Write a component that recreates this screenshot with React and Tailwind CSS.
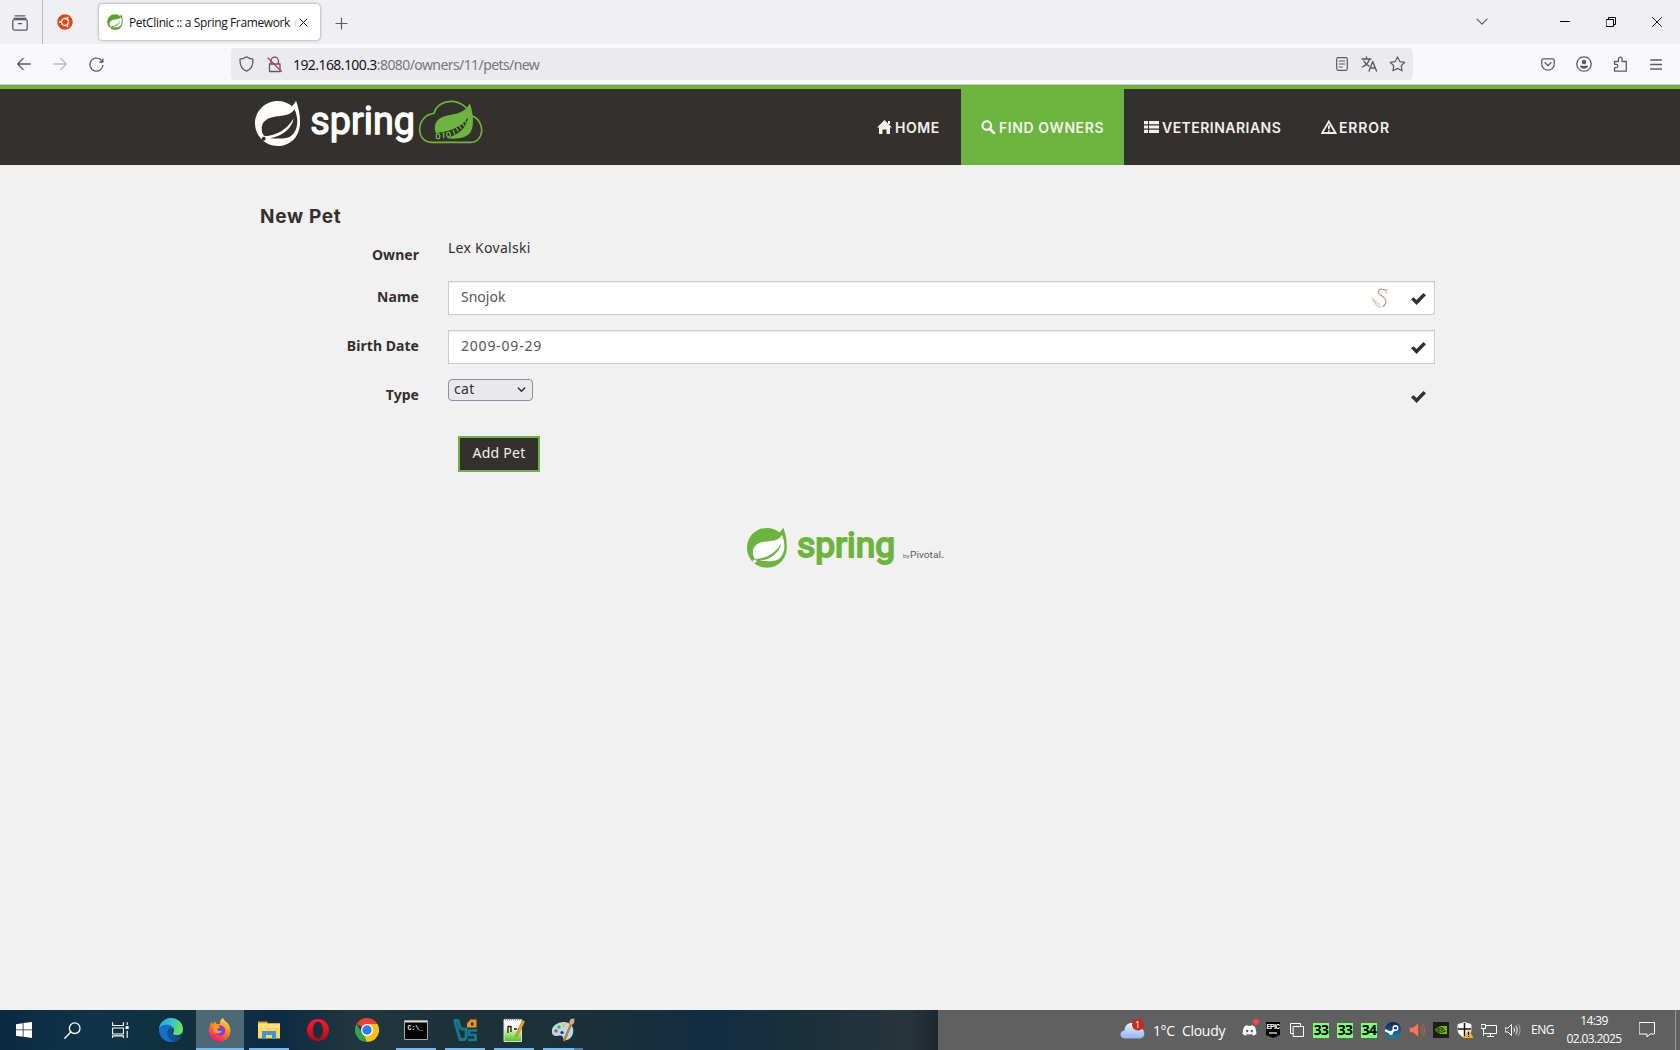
import React from "react";
import { FaDiscord, FaUbuntu } from "react-icons/fa";
import { SiNvidia } from "react-icons/si";

const UI = "font-['Open_Sans','Noto_Sans',sans-serif]";
const BODY = "font-['Noto_Sans','Open_Sans',sans-serif]";
const HEAD = "font-['Inter','Open_Sans',sans-serif]";

function Ico({ w = 16, h = w, vb, className = "", sw = 1.3, children }) {
  return (
    <svg width={w} height={h} viewBox={vb || `0 0 ${w} ${h}`} className={`shrink-0 ${className}`} fill="none" stroke="currentColor" strokeWidth={sw} strokeLinecap="round" strokeLinejoin="round">
      {children}
    </svg>
  );
}

/* Spring leaf mark on a 137x137 canvas */
function LeafMark({ color, leaf }) {
  return (
    <g>
      <path d="M112 19C117 14 121 8 124 2C131 20 136 42 136 62C138 108 108 138 69 138C32 138 1 108 1 70C1 33 32 3 69 3C86 3 101 9 112 19Z" fill={color} />
      <path d="M119 27C108 49 82 46 59 50C35 54 20 67 21 87C21 98 25 105 31 109C64 106 96 92 117 55C112 85 84 110 44 115C69 115 91 119 108 109C133 91 132 52 119 27Z" fill={leaf} />
      <circle cx="27" cy="116" r="6" fill={leaf} />
    </g>
  );
}

function HeaderLogo() {
  return (
    <svg width="228" height="47" viewBox="90 180 684 141" className="block shrink-0 overflow-visible">
      <g transform="translate(89 180)">
        <LeafMark color="#fff" leaf="#34302d" />
      </g>
      <text x="256" y="281" textLength="314" lengthAdjust="spacingAndGlyphs" fontFamily="Roboto, sans-serif" fontWeight="400" fontSize="116" fill="#fff" stroke="#fff" strokeWidth="4" strokeLinejoin="round">spring</text>
      <path d="M620 307C570 307 572 226 627 220C640 172 718 170 736 226C783 238 780 307 736 307Z" fill="none" stroke="#6db33f" strokeWidth="5" />
      <path d="M734 190C745 218 748 255 738 274C726 297 692 299 660 294C700 284 722 260 729 233C708 263 677 274 633 280C623 256 634 233 664 227C695 222 722 218 734 190Z" fill="#6db33f" />
      <path d="M633 280C677 274 708 263 729 233C724 262 704 284 662 295C650 299 640 299 634 298Z" fill="#34302d" />
      <g fill="none" stroke="#6db33f" strokeWidth="4">
        <rect x="634" y="282" width="10" height="14" rx="3" />
        <path d="M652 281l4-2v16M668 277c8-4 11 11 4 13s-10-10-4-13Z" />
        <path d="M684 270l6 14M694 264l6 10M703 257l6 10M712 250l6 8M719 242l5 7" />
      </g>
    </svg>
  );
}

function FooterLogo() {
  return (
    <svg width="200" height="42" viewBox="45 36 600 126" className="block shrink-0 overflow-visible">
      <g transform="translate(47 36) scale(.885)">
        <LeafMark color="#6db33f" leaf="#fff" />
      </g>
      <text x="198" y="127" textLength="294" lengthAdjust="spacingAndGlyphs" fontFamily="Roboto, sans-serif" fontWeight="400" fontSize="106" fill="#6db33f" stroke="#6db33f" strokeWidth="6" strokeLinejoin="round">spring</text>
      <text x="516" y="128" textLength="19" lengthAdjust="spacingAndGlyphs" fontFamily="Roboto, sans-serif" fontSize="18" fill="#666">by</text>
      <text x="537" y="128" textLength="93" lengthAdjust="spacingAndGlyphs" fontFamily="Roboto, sans-serif" fontSize="29" fill="#5c5c5c">Pivotal</text>
      <path d="M631 127h7" stroke="#777" strokeWidth="3" />
    </svg>
  );
}

function TabStrip() {
  return (
    <div className="flex h-[44px] items-center bg-[#f0eff4] text-[#5b5b66]">
      <div className="flex h-full w-[43px] items-center justify-center border-r border-[#b9b9c0] pl-[-2px]">
        <Ico w={16} className="mr-[3px] mt-[1px]" sw={1.3}><path d="M3 .8h10M2 3.4h12" /><rect x=".8" y="4.6" width="14.4" height="10.6" rx="2" /><path d="M6.3 8.600h3.400" /></Ico>
      </div>
      <div className="flex w-[56px] justify-center pr-[12px]">
        <span className="flex h-4 w-4 items-center justify-center rounded-full bg-white text-[#dd4814]"><FaUbuntu size={16} /></span>
      </div>
      <div className="flex h-[36px] w-[221px] items-center rounded-[4px] bg-white pl-2 text-[#15141a] shadow-[0_0_3px_rgba(0,0,0,.45)]">
        <svg width="16" height="16" viewBox="0 0 138 139" className="shrink-0"><LeafMark color="#5fa134" leaf="#fff" /></svg>
        <span className={`${UI} ml-[6px] mt-[2px] w-[163px] flex-none whitespace-nowrap text-[12px] leading-4 tracking-[-0.37px]`}>PetClinic :: a Spring Framework</span>
        <span className={`${UI} ml-[2px] mt-[2px] w-[3px] overflow-hidden text-[12px] leading-4 text-gray-300`}>d</span>
        <Ico w={9} className="ml-[2px]" sw={1}><path d="M1 1l7 7M8 1l-7 7" /></Ico>
      </div>
      <Ico w={13} className="ml-[15px] mt-[2px]" sw={1.2}><path d="M6.500 1v11M1 6.500h11" /></Ico>
      <div className="flex-1" />
      <Ico w={12} h={8} className="mr-[72px]" sw={1.2}><path d="M1 1.200l5 5 5-5" /></Ico>
      <Ico w={10} className="mr-[36px] text-black" sw={1}><path d="M.5 4.500h9" /></Ico>
      <Ico w={10} className="mr-[36px] text-black" sw={1}><path d="M.5 2.500h7v7h-7zM2.500 2.500v-2h7v7h-2" /></Ico>
      <Ico w={10} className="mr-[18px] text-black" sw={0.9}><path d="M.5.5l9 9M9.500.5l-9 9" /></Ico>
    </div>
  );
}

function Toolbar() {
  return (
    <div className="flex h-[41px] items-start border-b border-[#cccccf] bg-[#f9f9fb] pt-[4px] text-[#5b5b66]">
      <div className="flex h-8 w-[231px] items-center pl-[17px]">
        <Ico w={14} sw={1.3}><path d="M13.300 7H.8M6 1.500L.7 7 6 12.500" /></Ico>
        <Ico w={14} className="ml-[22px] text-[#bcbcc3]" sw={1.3}><path d="M.7 7h12.500M8 1.500L13.300 7 8 12.500" /></Ico>
        <Ico w={15} className="ml-[22px]" sw={1.3}><path d="M13.900 8.500A6.500 6.500 0 1 1 11.500 2.500" /><path d="M14.500 1v4.700H9.800z" fill="currentColor" stroke="none" /></Ico>
      </div>
      <div className="flex h-8 w-[1182px] items-center rounded-[4px] bg-[#ebebed] px-[8px]">
        <Ico w={15} h={16} sw={1.3}><path d="M7.500.8C9.500 2.400 12 3 14 3.200C14.300 9.500 11.800 13.500 7.500 15.200C3.200 13.500.7 9.500 1 3.200C3 3 5.500 2.400 7.500.8Z" /></Ico>
        <Ico w={16} h={17} className="ml-[13px]" sw={1.3}><path d="M4 8V4.800a3.700 3.700 0 0 1 7.400 0V8M2.500 8h10.500v7.500H2.500z" /><path d="M1 2l13.500 13.500" stroke="#e22850" strokeWidth="1.200" /></Ico>
        <span className={`${BODY} ml-[10px] mt-[2px] whitespace-nowrap text-[14px] leading-5 tracking-[-0.58px] text-[#77777c]`}><span className="text-[#15141a]">192.168.100.3</span>:8080/owners/11/pets/new</span>
        <div className="flex-1" />
        <Ico w={12} h={14} sw={1.2}><rect x=".7" y=".7" width="10.600" height="12.600" rx="1.500" /><path d="M3.300 4h5.400M3.300 7h5.400M3.300 10h3" /></Ico>
        <Ico w={17} h={16} className="ml-[13px]" sw={1.4}><path d="M1 3h9M5.500 1v2M8.500 3C7.500 6.500 5 9 1.500 11M3 5c1 2.500 2.800 4 5 5.200M8 15l3.700-9.500L15.500 15M9.300 12h5" /></Ico>
        <Ico w={17} h={16} className="ml-[11px] mr-[-1px]" sw={1.2}><path d="M8.500 1l2.300 4.600 5 .7-3.600 3.500.9 5-4.600-2.400-4.600 2.400.9-5L1.200 6.300l5-.7z" /></Ico>
      </div>
      <div className="flex h-8 flex-1 items-center justify-end pr-[17px]">
        <Ico w={14} h={13} sw={1.3}><path d="M2 .8h10c.7 0 1.200.5 1.200 1.200V6a6.200 6.200 0 0 1-12.400 0V2C.8 1.300 1.300.8 2 .8zM4 4.800l3 3 3-3" /></Ico>
        <Ico w={16} className="ml-[21px]" sw={1.3}><circle cx="8" cy="8" r="7.200" /><circle cx="8" cy="6" r="2.300" fill="currentColor" stroke="none" /><path d="M3.800 9.800h8.400c-.4 2.100-2 3-4.200 3s-3.800-.9-4.200-3z" fill="currentColor" stroke="none" /></Ico>
        <Ico w={15} h={16} className="ml-[21px]" sw={1.300}><path d="M1.500 5.500h4V3a1.800 1.800 0 0 1 3.600 0v2.500h4.200v9.700H1.500v-3.500h1.600a1.700 1.700 0 0 0 0-3.400H1.500z" /></Ico>
        <Ico w={12} h={11} className="ml-[22px] mr-px" sw={1.300}><path d="M.6 1h11M.6 5.500h11M.6 10h11" /></Ico>
      </div>
    </div>
  );
}

const navItems = [
  { t: "HOME", w: "w-[104px]", tr: "tracking-[0.55px]", icon: <path d="M7.500 0L15 7.500H13V14H9.500V9.500h-4V14H2V7.500H0zM11 1h2v3h-2z" fill="currentColor" stroke="none" /> },
  { t: "FIND OWNERS", w: "w-[163px]", tr: "tracking-[0.6px]", on: true, icon: <><circle cx="5.800" cy="5.500" r="4.300" strokeWidth="2.200" /><path d="M9 9l4 4" strokeWidth="2.800" /></> },
  { t: "VETERINARIANS", w: "w-[177px]", tr: "tracking-[0.47px]", icon: <path d="M0 1h4v3.200H0zM5 1h10v3.200H5zM0 5.400h4v3.200H0zM5 5.400h10v3.200H5zM0 9.800h4V13H0zM5 9.800h10V13H5z" fill="currentColor" stroke="none" /> },
  { t: "ERROR", w: "w-[109px]", tr: "tracking-[0.85px]", icon: <><path d="M7.800 1.500L14.500 13H1.200z" strokeWidth="1.800" strokeLinejoin="miter" /><path d="M6.700 5.500h2.400L8.500 9.500H7.200zM7 10.300h1.700v1.400H7z" fill="currentColor" stroke="none" /></> },
];

function Navbar() {
  return (
    <div className="flex h-[80px] border-t-4 border-[#6db33f] bg-[#34302d] pl-[255px] pr-[270px]">
      <div className="pt-[11px]"><HeaderLogo /></div>
      <div className="flex-1" />
      <nav className="flex text-[#f1f1f1]">
        {navItems.map((n) => (
          <div key={n.t} className={`flex h-[76px] items-center pl-5 ${n.w} ${n.on ? "bg-[#6db33f]" : ""}`}>
            <Ico w={16} h={14}>{n.icon}</Ico>
            <span className={`${HEAD} ml-[2px] mt-px whitespace-nowrap text-[14px] font-semibold leading-5 ${n.tr}`}>{n.t}</span>
          </div>
        ))}
      </nav>
    </div>
  );
}

function Check() {
  return (
    <svg width="15" height="12" viewBox="0 0 15 12" className="shrink-0"><path d="M0 6.200L2.500 4.200 5.600 7 12.400 0 15 2.200 5.600 12z" fill="#34302d" /></svg>
  );
}

function Row({ label, className = "", pad = "pt-[6px]", children }) {
  return (
    <div className={`flex ${className}`}>
      <div className={`${BODY} w-[419px] shrink-0 text-right text-[14px] font-bold leading-5 tracking-[0.05px] ${pad}`}>{label}</div>
      <div className="ml-[29px] flex w-[987px]">{children}</div>
    </div>
  );
}

function Form() {
  const field = "flex h-[34px] w-full items-center border border-[#ccc] bg-white pl-[12px] pr-[8px] text-[14px] leading-5 text-[#555] shadow-[inset_0_1px_1px_rgba(0,0,0,.075)]";
  return (
    <main className={`${BODY} h-[845px] overflow-hidden bg-[#f1f1f1] text-[#34302d]`}>
      <h2 className={`${HEAD} pl-[260px] pt-[39px] text-[19px] font-bold leading-[26px] tracking-[0.7px]`}>New Pet</h2>
      <Row label="Owner" pad="pt-[7px]" className="mt-[8px] h-[43px]"><span className="text-[14px] leading-5 tracking-[0.28px]">Lex Kovalski</span></Row>
      <Row label="Name" className="h-[49px]">
        <div className={field}>
          <span className="flex-1 pb-[2px]">Snojok</span>
          <svg width="18" height="20" viewBox="0 0 18 20" className="mr-[22px]" fill="none" stroke="#b9967f"><path d="M16.500 1.500C13 3 11 0 8.500 1.500C6 3.500 8 6 11 8C16 11 16 16 12 18.500" strokeWidth="1.100" /><path d="M12 18.500C7 21 3 15 1 9.500C3 12 5 15 9 17" strokeWidth="1.200" opacity=".5" /><path d="M14.500 2.500l1 3" /></svg>
          <div className="pt-px"><Check /></div>
        </div>
      </Row>
      <Row label="Birth Date" className="h-[49px]">
        <div className={field}><span className="flex-1 pb-[2px] tracking-[0.8px]">2009-09-29</span><div className="pt-px"><Check /></div></div>
      </Row>
      <Row label="Type" className="h-[57px]">
        <div className="flex h-[22px] w-[85px] items-center justify-between rounded-[4px] border border-[#8f8f9d] bg-[#e9e9ed] pl-[5px] pr-[6px] text-[14px] leading-4">
          <span className="pb-[2px] tracking-[0.4px]">cat</span>
          <Ico w={9} h={6} sw={1.500}><path d="M1.300 1L4.500 4.300 7.700 1" /></Ico>
        </div>
        <div className="flex-1" />
        <div className="mr-[9px] pt-[12px]"><Check /></div>
      </Row>
      <button className="ml-[458px] flex h-[36px] w-[82px] items-center justify-center border-2 border-[#6db33f] bg-[#34302d] pb-[2px] text-[14px] leading-5 tracking-[0.25px] text-[#f1f1f1]">Add Pet</button>
      <div className="ml-[746px] mt-[55px]"><FooterLogo /></div>
    </main>
  );
}

function Svg24({ children, s = 24 }) {
  return <svg width={s} height={s} viewBox="0 0 24 24" className="shrink-0">{children}</svg>;
}

const apps = [
  { id: "edge", icon: <Svg24><defs><linearGradient id="eg" x1="0" y1="0" x2="1" y2=".3"><stop offset="0" stopColor="#2a9fe0" /><stop offset=".5" stopColor="#35c1d1" /><stop offset="1" stopColor="#66e35a" /></linearGradient></defs><circle cx="12" cy="12" r="12" fill="#1670c4" /><path d="M0 11C1 4 6 0 12 0C19 0 24 5 24 11C24 15 21 17.500 17.500 17.500C14 17.500 13 16 14 15C17 11 13 6.500 8 6.500C4 6.500 1 8.500 0 11Z" fill="url(#eg)" /><path d="M12 9C7 11 6.500 19 14 23.500C18 23 21 20.500 22.500 18C18 20.500 11 18.500 12 12Z" fill="#124f96" /><path d="M22.500 18.200C17 20.500 12 17.500 12.400 12.500C12.500 11 13 10 14 10.300C16 12.500 13 15 14.500 16.500C17 18 21 17.500 23 15Z" fill="#123a52" /></Svg24> },
  { id: "firefox", active: true, icon: <Svg24><defs><linearGradient id="ff" x1=".8" y1="0" x2=".3" y2="1"><stop offset="0" stopColor="#ffe14a" /><stop offset=".45" stopColor="#ff8a1f" /><stop offset="1" stopColor="#f5156c" /></linearGradient></defs><path d="M15 0C16 3 19 4 21 7C25 15 20 23.500 12 23.500C5 23.500 .500 18 1 12C1 9 2.500 6 3.500 4L5 6L7 3.500L8.500 6L12 6C11.500 3.500 13 1 15 0Z" fill="url(#ff)" /><circle cx="12" cy="12.500" r="5.300" fill="#7a42dd" /><path d="M4 8C7 6 9 8 12 8.500C12 10 10 10.500 9 11C9.500 13.500 12 13 14 12.500C13 16 7 17 5 12Z" fill="#ff9a24" /></Svg24> },
  { id: "explorer", run: "w-10", icon: <Svg24><path d="M1 3.500h9.500v3H1z" fill="#e5a00d" /><path d="M1 5.500h22v15H1z" fill="#ffd667" /><path d="M1 5.500h22v4H1z" fill="#ffdf80" /><path d="M5 21v-8h14v8h-4v-4H9v4z" fill="#3d95d6" /></Svg24> },
  { id: "opera", icon: <Svg24><defs><linearGradient id="op" x1="0" y1="0" x2="0" y2="1"><stop offset="0" stopColor="#ff1b2d" /><stop offset="1" stopColor="#b30b16" /></linearGradient></defs><path fillRule="evenodd" d="M12 1a11 11 0 1 0 0 22a11 11 0 1 0 0-22zM12 3.500c3 0 5 4 5 8.500s-2 8.500-5 8.500s-5-4-5-8.500s2-8.500 5-8.500z" fill="url(#op)" /></Svg24> },
  { id: "chrome", icon: <Svg24><path d="M12 12L1.600 6A12 12 0 0 1 22.400 6z" fill="#ea4335" /><path d="M12 12V6H22.400A12 12 0 0 1 12 24z" fill="#fbc116" /><path d="M12 12L12 24A12 12 0 0 1 1.600 6L7 15z" fill="#31a350" /><path d="M17.200 15L12 24L9 17z" fill="#fbc116" /><circle cx="12" cy="12" r="6" fill="#fff" /><circle cx="12" cy="12" r="4.700" fill="#2d7df0" /></Svg24> },
  { id: "cmd", run: "w-10", icon: <Svg24><path d="M.5 2.500h23v19H.5z" fill="#050505" stroke="#aaa" /><path d="M1 3h22v1.500H1z" fill="#ddd" /><text x="3.500" y="11.500" fontFamily="Liberation Mono, monospace" fontWeight="700" fontSize="6.500" fill="#eee">C:\_</text></Svg24> },
  { id: "virtualbox", run: "w-10", icon: <Svg24><path d="M.5 2.500h4.500l2.500 8.500" fill="none" stroke="#147a91" strokeWidth="3" /><path d="M2 4l5 17.500h5.500M8 11h5v10.500" fill="none" stroke="#147a91" strokeWidth="2.800" /><path d="M14 9.500V5.500l3.500-4h6v8z M18 4.500v3h2.500v-3z" fill="#ed951e" fillRule="evenodd" /><path d="M24 12.500h-8v4.500h6.500v5H15" fill="none" stroke="#147a91" strokeWidth="2.600" /></Svg24> },
  { id: "notepad", run: "w-10", icon: <Svg24><defs><linearGradient id="np" x1="0" y1="0" x2="0" y2="1"><stop offset=".3" stopColor="#fff" /><stop offset="1" stopColor="#4fc414" /></linearGradient></defs><path d="M2 1.500h17.500v22H2z" fill="url(#np)" stroke="#ddd" /><path d="M3 1.500h16" stroke="#888" strokeWidth="2" strokeDasharray="1 1" /><path d="M6 8v7M6 8.500h3V14M12 11h3M16 11h2" stroke="#222" fill="none" strokeWidth="1.400" /><path d="M20.500 2L23 3.500L15.500 18L13.500 19L14 16.500z" fill="#f2a51d" stroke="#8a5c12" strokeWidth=".5" /></Svg24> },
  { id: "paint", run: "w-[31px]", icon: <Svg24><path d="M1 14C0 8 7 3.500 14 4C22 5 24 12 21 18C18 23 13 23 12 20C12 17 9 17 6 18C3 18 1 17 1 14Z" fill="#b9d8ee" /><circle cx="5" cy="13" r="1.800" fill="#e24638" /><circle cx="8" cy="9" r="1.700" fill="#4eaf45" /><circle cx="13" cy="7" r="1.700" fill="#f0c22d" /><circle cx="11" cy="14.500" r="1.600" fill="#16394c" /><path d="M20.500 5L13 23" stroke="#c77829" strokeWidth="2.300" /><path d="M18 5L19.500 1L23.500 .5L23 5L21 7z" fill="#d8aa7e" /></Svg24> },
];

const temp = (v) => <span className="flex h-[15px] w-4 items-center justify-center bg-[#7dff7d] font-['Open_Sans',sans-serif] text-[14px] font-bold leading-none tracking-[-0.8px] text-black">{v}</span>;

const tray = [
  <span className="relative flex"><FaDiscord size={15} className="text-white" /><i className="absolute -right-0.5 -top-1 h-[6px] w-[6px] rounded-full bg-[#f04747]" /></span>,
  <span className="flex h-4 w-[14px] flex-col items-center bg-black pt-[2px] font-['Roboto',sans-serif] text-[7px] font-bold leading-[7px] tracking-[-0.5px] text-white [clip-path:polygon(0_0,100%_0,100%_82%,50%_100%,0_82%)]">EPIC<i className="mt-px h-[2px] w-2 bg-[#999]" /></span>,
  <Ico w={14} sw={1} className="text-white"><path d="M3.500 3.500h10v10h-10zM3.500 10.500h-3v-10h10v3" /></Ico>,
  temp("33"), temp("33"), temp("34"),
  <span className="flex rounded-full bg-gradient-to-b from-[#101f4c] to-[#1486b8]"><svg width="16" height="16" viewBox="0 0 16 16"><path d="M0 8l6 3L10.500 6" stroke="#fff" strokeWidth="2.500" fill="none" /><circle cx="10.500" cy="6" r="3" fill="#fff" /><circle cx="10.500" cy="6" r="1.600" fill="#16386b" /><circle cx="6" cy="11" r="2" fill="#fff" /></svg></span>,
  <svg width="16" height="16" viewBox="0 0 16 16"><path d="M.5 5.500h3.500L9.500.8v14.400L4 10.500H.5z" fill="#ec7b5c" stroke="#a84a33" strokeWidth=".7" /><path d="M11.800 4c2 2.500 2 5.500 0 8M13.800 2c2.300 3.500 2.300 8.500 0 12" stroke="#b0614f" strokeWidth="1.200" fill="none" /></svg>,
  <span className="flex h-4 w-4 items-center justify-center bg-[#1c1c1c] text-[#76b900]"><SiNvidia size={12} /></span>,
  <svg width="17" height="16" viewBox="0 0 17 16"><path d="M7.500 .5l6.500 2v5c0 4-3 6.500-6.500 8C4 14 1 11.500 1 7.500v-5z" fill="#fff" stroke="#eee" /><path d="M7.500 1v14M1 7h13" stroke="#111" strokeWidth="1.500" /><path d="M11.500 7l5 9h-10z" fill="#f6b617" /><path d="M11.500 10v3M11.500 14v1" stroke="#111" strokeWidth="1.200" /></svg>,
  <Ico w={16} h={14} sw={1} className="text-white"><path d="M5.500 2.500h10v8h-12M.5 1.500h4v4h-4zM2.500 5.500v7M9.500 10.500v3M6.500 13.500h6" /></Ico>,
  <Ico w={16} h={14} sw={1} className="text-white"><path d="M.5 5h2.500l3.500-3.500v11L3 9H.5zM9 5c.8 1.200.8 2.800 0 4M11 3c1.700 2.300 1.700 5.700 0 8" /><path d="M13 1c2.700 3.500 2.700 8.500 0 12" opacity=".45" /></Ico>,
];

function Taskbar() {
  return (
    <footer className="flex h-10 bg-[linear-gradient(90deg,#0c2a3f_0%,#0f3348_10%,#10303f_18%,#0e2b44_30%,#22363e_38%,#1c3138_48%,#1b3039_62%,#122c43_76%,#1a303b_86%,#28343a_97%,#1c282e_100%)] bg-[length:938px_40px] bg-no-repeat">
      <div className="flex w-[938px]">
        <div className="flex w-12 items-center justify-center"><svg width="16" height="16" viewBox="0 0 16 16" fill="#fff"><path d="M0 2.200L6.700 1.200V7.500H0zM7.500 1.100L16 0V7.500H7.500zM0 8.300h6.700v6.400L0 13.800zM7.500 8.300H16V16l-8.500-1.200z" /></svg></div>
        <div className="flex w-12 items-center justify-center text-white"><Ico w={17} sw={1.300}><circle cx="10.700" cy="6.200" r="5.300" /><path d="M6.800 10L.8 16.200" /></Ico></div>
        <div className="mr-[3px] flex w-12 items-center justify-center text-white"><Ico w={17} h={16} sw={1.100}><path d="M.6.6v2.900h10.800V.6M.6 6h10.800v6H.6zM.6 15.400v-1.500h10.800v1.500M15.200.6v2M15.200 9v6.400" /><path d="M13.600 4h3v3h-3z" fill="currentColor" stroke="none" /></Ico></div>
        {apps.map((a) => (
          <div key={a.id} className={`relative mr-px flex w-12 items-center justify-center ${a.active ? "bg-[#4e6875]" : ""}`}>
            {a.icon}
            {a.active && <i className="absolute bottom-0 left-0 h-[2px] w-12 bg-[#76b9ed]" />}
            {a.run && <i className={`absolute bottom-0 left-1 h-[2px] bg-[#76b9ed] ${a.run}`} />}
            {a.id === "paint" && <i className="absolute bottom-0 left-[35px] h-[2px] w-[9px] bg-[#4a7fa8]" />}
          </div>
        ))}
      </div>
      <div className={`${UI} flex flex-1 items-center bg-[#606060] text-white`}>
        <div className="relative ml-[182px] h-[26px] w-[25px] shrink-0">
          <svg width="25" height="26" viewBox="0 0 25 26"><defs><linearGradient id="cl" x1="0" y1="0" x2="0" y2="1"><stop offset="0" stopColor="#e9f1ff" /><stop offset="1" stopColor="#91b5ee" /></linearGradient></defs><path d="M5 21.500C-1 21.500-1 14 4.500 13.500C5 4 17 4 18 11.500C26 10 26 21.500 20 21.500Z" fill="url(#cl)" /><circle cx="18" cy="7.500" r="6" fill="#c42b1c" /></svg>
          <span className="absolute left-[15px] top-[2px] text-[9px] leading-[11px]">1</span>
        </div>
        <span className="ml-[8px] mt-[2px] w-[29px] whitespace-nowrap text-[14px] leading-5 tracking-[-0.4px]">1°C</span>
        <span className="mt-[2px] w-[55px] whitespace-nowrap text-[14px] leading-5 tracking-[-0.3px]">Cloudy</span>
        {tray.map((t, i) => (
          <div key={i} className="flex h-10 w-6 shrink-0 items-center justify-center">{t}</div>
        ))}
        <span className="ml-[6px] w-[25px] text-[12px] leading-4 tracking-[-0.5px]">ENG</span>
        <div className="ml-[7px] w-[62px] text-center text-[12px] leading-[18px] tracking-[-0.6px]"><div>14:39</div><div>02.03.2025</div></div>
        <Ico w={16} sw={1} className="ml-[14px]"><path d="M.5.5h15v11.500h-4.500l-3 3v-3H.5z" /></Ico>
        <i className="ml-auto mr-[4px] h-10 w-px bg-[#999]" />
      </div>
    </footer>
  );
}

export default function App() {
  return (
    <div className="h-[1050px] w-[1680px] overflow-hidden">
      <TabStrip />
      <Toolbar />
      <Navbar />
      <Form />
      <Taskbar />
    </div>
  );
}
